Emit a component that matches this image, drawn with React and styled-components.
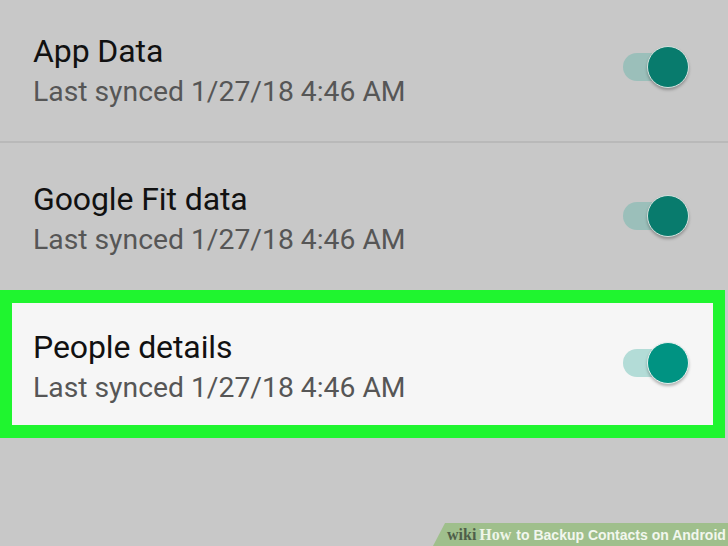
import React from "react";
import styled, { createGlobalStyle } from "styled-components";

const Global = createGlobalStyle`
  html, body { margin: 0; padding: 0; }
  body { width: 728px; height: 546px; overflow: hidden; background: #c8c8c8; }
`;

const Page = styled.div`
  width: 728px;
  height: 546px;
  display: flex;
  flex-direction: column;
  background: #c8c8c8;
  font-family: Roboto, "Noto Sans", sans-serif;
  overflow: hidden;
`;

const Row = styled.div`
  box-sizing: border-box;
  height: ${(p) => p.$h}px;
  padding: 0 39px ${(p) => p.$pb || 0}px 33px;
  display: flex;
  align-items: center;
  justify-content: space-between;
  border-bottom: ${(p) => (p.$divider ? "2px solid #b9b9b9" : "none")};
  flex-shrink: 0;
`;

const Highlight = styled.div`
  box-sizing: border-box;
  height: 148px;
  margin-right: 3px;
  border: 13px solid #1ff52f;
  border-left-width: 12px;
  border-right-width: 12px;
  background: #f6f6f6;
  padding: 0 24px 0 21px;
  display: flex;
  align-items: center;
  justify-content: space-between;
  flex-shrink: 0;
`;

const TextBlock = styled.div`
  display: flex;
  flex-direction: column;
  margin-top: 5px;
`;

const Title = styled.div`
  font-size: 32px;
  line-height: 38px;
  color: #111;
  letter-spacing: -0.1px;
`;

const Subtitle = styled.div`
  margin-top: 4px;
  font-size: 28.3px;
  line-height: 36px;
  color: #565656;
`;

const Toggle = styled.div`
  position: relative;
  width: 66px;
  height: 42px;
  margin-bottom: 2px;
  flex-shrink: 0;
`;

const Track = styled.div`
  position: absolute;
  left: 0;
  top: 7px;
  width: 52px;
  height: 28px;
  border-radius: 14px;
  background: ${(p) => (p.$active ? "#b3dcd7" : "#9bbfba")};
`;

const Thumb = styled.div`
  position: absolute;
  right: 0;
  top: 0;
  width: 42px;
  height: 42px;
  box-sizing: border-box;
  border-radius: 50%;
  background: ${(p) => (p.$active ? "#009382" : "#087b6d")};
  border: 1px solid ${(p) => (p.$active ? "#e6f2f0" : "#d6e2df")};
  box-shadow: 0 2px 3px rgba(0, 0, 0, 0.28);
`;

const Spacer = styled.div`
  flex: 1;
`;

const BannerWrap = styled.div`
  height: 23px;
  display: flex;
  justify-content: flex-end;
  flex-shrink: 0;
`;

const Banner = styled.div`
  width: 295px;
  height: 23px;
  background: #9fbf8c;
  clip-path: polygon(12px 0, 100% 0, 100% 100%, 0 100%);
  display: flex;
  align-items: center;
  padding-left: 14px;
  box-sizing: border-box;
  white-space: nowrap;
`;

const Wiki = styled.span`
  font-family: "Liberation Serif", "DejaVu Serif", serif;
  font-weight: bold;
  font-size: 16px;
  margin-left: ${(p) => (p.$dark ? 0 : 3)}px;
  color: ${(p) => (p.$dark ? "#4f5e49" : "#eef5e8")};
`;

const BannerText = styled.span`
  font-family: "Liberation Sans", Arial, sans-serif;
  font-weight: bold;
  font-size: 14px;
  color: #f2f7ee;
  margin-left: 5px;
`;

function Switch({ active }) {
  return (
    <Toggle>
      <Track $active={active} />
      <Thumb $active={active} />
    </Toggle>
  );
}

function Item({ title, sub, active }) {
  return (
    <>
      <TextBlock>
        <Title>{title}</Title>
        <Subtitle>{sub}</Subtitle>
      </TextBlock>
      <Switch active={active} />
    </>
  );
}

const SUB = "Last synced 1/27/18 4:46 AM";

export default function App() {
  return (
    <Page>
      <Global />
      <Row $h={143} $pb={5} $divider>
        <Item title="App Data" sub={SUB} />
      </Row>
      <Row $h={147}>
        <Item title="Google Fit data" sub={SUB} />
      </Row>
      <Highlight>
        <Item title="People details" sub={SUB} active />
      </Highlight>
      <Spacer />
      <BannerWrap>
        <Banner>
          <Wiki $dark>wiki</Wiki>
          <Wiki>How</Wiki>
          <BannerText>to Backup Contacts on Android</BannerText>
        </Banner>
      </BannerWrap>
    </Page>
  );
}
